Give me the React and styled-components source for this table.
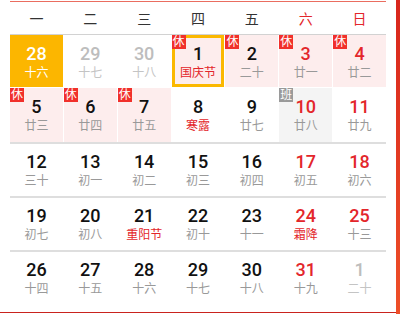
import React from "react";
import styled, { createGlobalStyle, css } from "styled-components";

const Global = createGlobalStyle`
  html, body { margin: 0; padding: 0; background: #fff; }
  body { font-family: "Liberation Sans", "Noto Sans CJK SC", sans-serif; }
`;

const Frame = styled.div`
  display: flex;
  width: 400px;
  height: 314px;
  overflow: hidden;
`;

const Main = styled.div`
  width: 396px;
  height: 313px;
  box-sizing: border-box;
  padding: 1px 10px 0 10px;
  border-bottom: 1px solid #c9231e;
`;

const SideBar = styled.div`
  width: 4px;
  height: 314px;
  background: linear-gradient(#d8261c, #ee4f28);
`;

const Header = styled.div`
  display: grid;
  grid-template-columns: repeat(7, 1fr);
  column-gap: 1px;
  height: 32px;
  border-top: 1px solid #ea6d60;
  border-bottom: 1px solid #d2d2d2;
`;

const WeekDay = styled.div`
  display: flex;
  align-items: center;
  justify-content: center;
  font-size: 14px;
  color: ${(p) => (p.$weekend ? "#e3262b" : "#333")};
`;

const Week = styled.div`
  display: grid;
  grid-template-columns: repeat(7, 1fr);
  column-gap: 1px;
  height: ${(p) => p.$h}px;
  ${(p) =>
    p.$line
      ? css`border-bottom: 2px solid #dedede;`
      : css`margin-bottom: ${p.$gap || 0}px;`}
`;

const bgFor = (kind) =>
  ({
    today: "#fcb600",
    rest: "#fdeded",
    work: "#f4f4f4",
  }[kind] || "transparent");

const Cell = styled.div`
  position: relative;
  display: flex;
  flex-direction: column;
  align-items: center;
  padding-top: ${(p) => p.$pad}px;
  box-sizing: border-box;
  background: ${(p) => bgFor(p.$kind)};
  ${(p) => p.$selected && css`box-shadow: inset 0 0 0 3px #fbb800;`}
`;

const numColor = (p) => {
  if (p.$kind === "today") return "#fff";
  if (p.$other) return "#bdbdbd";
  if (p.$weekend) return "#e3262b";
  return "#111";
};

const Num = styled.div`
  font-family: Roboto, "Liberation Sans", sans-serif;
  font-size: 18px;
  font-weight: 500;
  line-height: 18px;
  height: 18px;
  color: ${numColor};
`;

const lunarColor = (p) => {
  if (p.$kind === "today") return "#fff";
  if (p.$festival) return "#e3262b";
  if (p.$other) return "#c4c4c4";
  return "#999";
};

const Lunar = styled.div`
  margin-top: 2px;
  font-size: 12px;
  line-height: 16px;
  color: ${lunarColor};
`;

const Badge = styled.span`
  position: absolute;
  top: 0;
  left: 0;
  width: 14px;
  height: 14px;
  display: flex;
  align-items: center;
  justify-content: center;
  font-size: 12px;
  line-height: 14px;
  color: #fff;
  background: ${(p) => (p.$work ? "#9a9a9a" : "#f1302b")};
`;

const weekdays = ["一", "二", "三", "四", "五", "六", "日"];

// d: day, l: lunar, f: festival, o: other month, k: kind, b: badge, s: selected
const weeks = [
  [
    { d: 28, l: "十六", k: "today", o: true },
    { d: 29, l: "十七", o: true },
    { d: 30, l: "十八", o: true },
    { d: 1, l: "国庆节", f: true, k: "rest", b: "休", s: true },
    { d: 2, l: "二十", k: "rest", b: "休" },
    { d: 3, l: "廿一", k: "rest", b: "休" },
    { d: 4, l: "廿二", k: "rest", b: "休" },
  ],
  [
    { d: 5, l: "廿三", k: "rest", b: "休" },
    { d: 6, l: "廿四", k: "rest", b: "休" },
    { d: 7, l: "廿五", k: "rest", b: "休" },
    { d: 8, l: "寒露", f: true },
    { d: 9, l: "廿七" },
    { d: 10, l: "廿八", k: "work", b: "班" },
    { d: 11, l: "廿九" },
  ],
  [
    { d: 12, l: "三十" },
    { d: 13, l: "初一" },
    { d: 14, l: "初二" },
    { d: 15, l: "初三" },
    { d: 16, l: "初四" },
    { d: 17, l: "初五" },
    { d: 18, l: "初六" },
  ],
  [
    { d: 19, l: "初七" },
    { d: 20, l: "初八" },
    { d: 21, l: "重阳节", f: true },
    { d: 22, l: "初十" },
    { d: 23, l: "十一" },
    { d: 24, l: "霜降", f: true },
    { d: 25, l: "十三" },
  ],
  [
    { d: 26, l: "十四" },
    { d: 27, l: "十五" },
    { d: 28, l: "十六" },
    { d: 29, l: "十七" },
    { d: 30, l: "十八" },
    { d: 31, l: "十九" },
    { d: 1, l: "二十", o: true },
  ],
];

const rowProps = [
  { $h: 52, $gap: 1, pad: 10 },
  { $h: 54, $line: true, pad: 10 },
  { $h: 52, $line: true, pad: 9 },
  { $h: 52, $line: true, pad: 9 },
  { $h: 62, pad: 9 },
];

export default function App() {
  return (
    <>
      <Global />
      <Frame>
        <Main>
          <Header>
            {weekdays.map((w, i) => (
              <WeekDay key={w} $weekend={i >= 5}>
                {w}
              </WeekDay>
            ))}
          </Header>
          {weeks.map((week, wi) => {
            const { pad, ...rp } = rowProps[wi];
            return (
              <Week key={wi} {...rp}>
                {week.map((c, ci) => (
                  <Cell key={ci} $kind={c.k} $selected={c.s} $pad={pad}>
                    {c.b && <Badge $work={c.b === "班"}>{c.b}</Badge>}
                    <Num $kind={c.k} $other={c.o} $weekend={ci >= 5}>
                      {c.d}
                    </Num>
                    <Lunar $kind={c.k} $other={c.o} $festival={c.f}>
                      {c.l}
                    </Lunar>
                  </Cell>
                ))}
              </Week>
            );
          })}
        </Main>
        <SideBar />
      </Frame>
    </>
  );
}
